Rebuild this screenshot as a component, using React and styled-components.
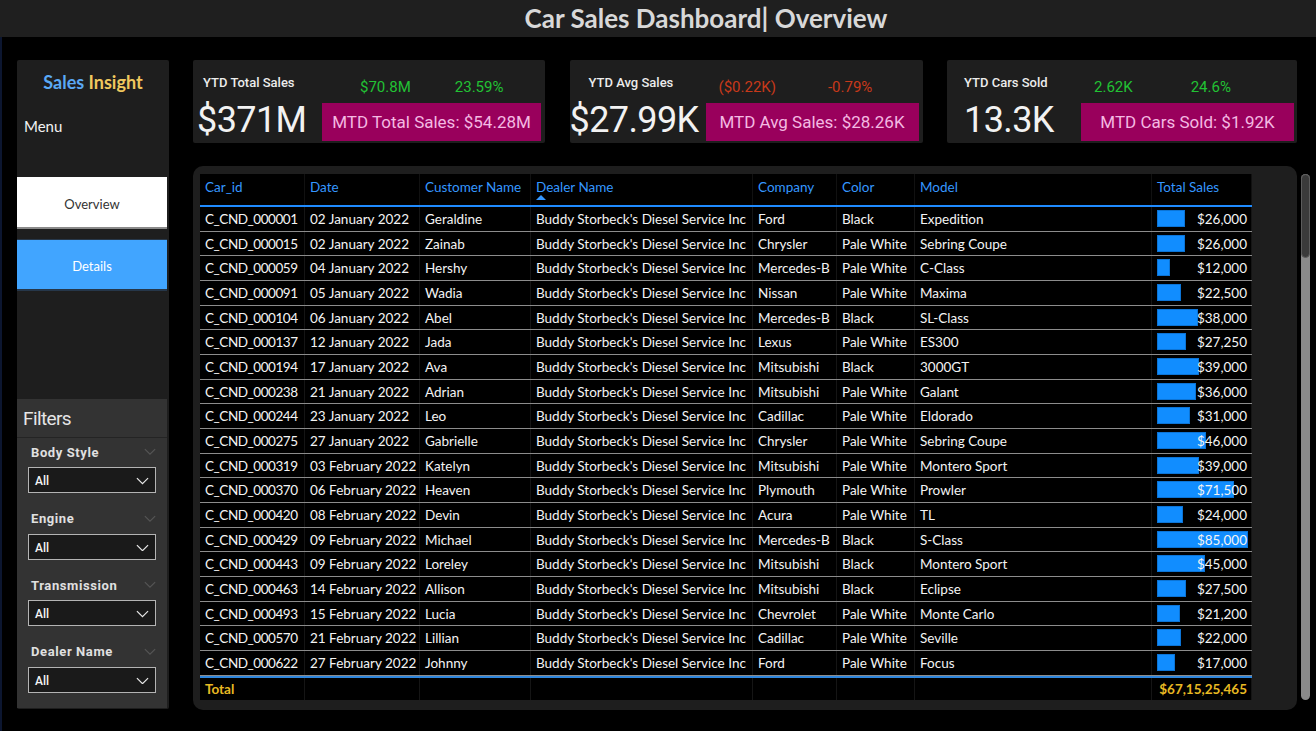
import styled, { createGlobalStyle } from 'styled-components';

const GlobalStyle = createGlobalStyle`
  html, body {
    margin: 0;
    padding: 0;
    background: #000;
  }
  body {
    font-family: Lato, "Liberation Sans", sans-serif;
    color: #fff;
  }
  * {
    box-sizing: border-box;
  }
`;

const rows = [
  ['C_CND_000001', '02 January 2022', 'Geraldine', 'Ford', 'Black', 'Expedition', 26000],
  ['C_CND_000015', '02 January 2022', 'Zainab', 'Chrysler', 'Pale White', 'Sebring Coupe', 26000],
  ['C_CND_000059', '04 January 2022', 'Hershy', 'Mercedes-B', 'Pale White', 'C-Class', 12000],
  ['C_CND_000091', '05 January 2022', 'Wadia', 'Nissan', 'Pale White', 'Maxima', 22500],
  ['C_CND_000104', '06 January 2022', 'Abel', 'Mercedes-B', 'Black', 'SL-Class', 38000],
  ['C_CND_000137', '12 January 2022', 'Jada', 'Lexus', 'Pale White', 'ES300', 27250],
  ['C_CND_000194', '17 January 2022', 'Ava', 'Mitsubishi', 'Black', '3000GT', 39000],
  ['C_CND_000238', '21 January 2022', 'Adrian', 'Mitsubishi', 'Pale White', 'Galant', 36000],
  ['C_CND_000244', '23 January 2022', 'Leo', 'Cadillac', 'Pale White', 'Eldorado', 31000],
  ['C_CND_000275', '27 January 2022', 'Gabrielle', 'Chrysler', 'Pale White', 'Sebring Coupe', 46000],
  ['C_CND_000319', '03 February 2022', 'Katelyn', 'Mitsubishi', 'Pale White', 'Montero Sport', 39000],
  ['C_CND_000370', '06 February 2022', 'Heaven', 'Plymouth', 'Pale White', 'Prowler', 71500],
  ['C_CND_000420', '08 February 2022', 'Devin', 'Acura', 'Pale White', 'TL', 24000],
  ['C_CND_000429', '09 February 2022', 'Michael', 'Mercedes-B', 'Black', 'S-Class', 85000],
  ['C_CND_000443', '09 February 2022', 'Loreley', 'Mitsubishi', 'Black', 'Montero Sport', 45000],
  ['C_CND_000463', '14 February 2022', 'Allison', 'Mitsubishi', 'Black', 'Eclipse', 27500],
  ['C_CND_000493', '15 February 2022', 'Lucia', 'Chevrolet', 'Pale White', 'Monte Carlo', 21200],
  ['C_CND_000570', '21 February 2022', 'Lillian', 'Cadillac', 'Pale White', 'Seville', 22000],
  ['C_CND_000622', '27 February 2022', 'Johnny', 'Ford', 'Pale White', 'Focus', 17000],
];

const kpis = [
  {
    label: 'YTD Total Sales', value: '$371M', a: '$70.8M', b: '23.59%', up: true,
    mtd: 'MTD Total Sales: $54.28M', w: 352, boxW: 219, labelPad: 10, valuePad: 4, right: 4,
    numPad: 38, numGap: 44,
  },
  {
    label: 'YTD Avg Sales', value: '$27.99K', a: '($0.22K)', b: '-0.79%', up: false,
    mtd: 'MTD Avg Sales: $28.26K', w: 353, boxW: 213, labelPad: 19, valuePad: 0, right: 4,
    numPad: 13, numGap: 52,
  },
  {
    label: 'YTD Cars Sold', value: '13.3K', a: '2.62K', b: '24.6%', up: true,
    mtd: 'MTD Cars Sold: $1.92K', w: 350, boxW: 213, labelPad: 17, valuePad: 17, right: 3,
    numPad: 13, numGap: 58,
  },
];

const columns = ['Car_id', 'Date', 'Customer Name', 'Dealer Name', 'Company', 'Color', 'Model', 'Total Sales'];
const colTemplate = '105px 115px 111px 222px 84px 78px 237px 100px';
const filters = ['Body Style', 'Engine', 'Transmission', 'Dealer Name'];

const fmt = (n) => '$' + n.toLocaleString('en-US');

const Page = styled.div`
  width: 1316px;
  height: 731px;
  overflow: hidden;
  display: flex;
  flex-direction: column;
`;

const TitleBar = styled.header`
  height: 37px;
  background: #1f1f1f;
  display: flex;
  align-items: center;
  justify-content: center;
  padding-left: 96px;
`;

const Title = styled.h1`
  margin: 0 0 2px;
  font-family: Lato, sans-serif;
  font-weight: 700;
  font-size: 26px;
  line-height: 30px;
  color: #d8d8d8;
`;

const Body = styled.div`
  flex: 1;
  display: flex;
  gap: 24px;
  padding: 23px 19px 0 15px;
  border-left: 2px solid #0c1630;
`;

const Sidebar = styled.aside`
  width: 152px;
  height: 649px;
  background: #1e1e1e;
  border-radius: 2px;
  display: flex;
  flex-direction: column;
`;

const Brand = styled.div`
  margin-top: 11px;
  height: 22px;
  text-align: center;
  font-size: 18px;
  font-weight: 700;
  line-height: 22px;
`;

const Word = styled.span`
  color: ${(p) => p.color};
`;

const MenuLabel = styled.div`
  margin-top: 24px;
  padding-left: 7px;
  font-size: 15px;
  line-height: 18px;
  color: #f2f2f2;
`;

const NavButton = styled.div`
  width: 150px;
  height: 52px;
  margin-top: ${(p) => p.top}px;
  padding-top: 3px;
  display: flex;
  align-items: center;
  justify-content: center;
  font-size: 13px;
  background: ${(p) => (p.active ? '#fff' : '#41a5ff')};
  color: ${(p) => (p.active ? '#333' : '#fff')};
  border-bottom: 2px solid ${(p) => (p.active ? '#8a8a8a' : '#26374a')};
  border-top: ${(p) => (p.active ? 'none' : '1px solid #26374a')};
`;

const FilterPanel = styled.div`
  margin-top: auto;
  margin-bottom: 1px;
  width: 150px;
  height: 309px;
  background: #333;
`;

const FilterHead = styled.div`
  height: 39px;
  padding-left: 6px;
  display: flex;
  align-items: center;
  font-family: Roboto, sans-serif;
  font-size: 19px;
  letter-spacing: -0.6px;
  color: #e6e6e6;
  border-bottom: 1px solid #242424;
`;

const FilterSection = styled.div`
  padding: 4px 11px 11.5px 11px;
`;

const FilterLabelRow = styled.div`
  height: 20px;
  display: flex;
  align-items: center;
  justify-content: space-between;
  padding-left: 3px;
  font-family: Roboto, sans-serif;
  font-weight: 700;
  font-size: 13px;
  letter-spacing: 0.6px;
  color: #e0e0e0;
`;

const Dropdown = styled.div`
  margin-top: 5px;
  height: 26px;
  width: 128px;
  background: #1a1a1a;
  border: 1px solid #b4b4b4;
  display: flex;
  align-items: center;
  justify-content: space-between;
  padding: 2px 6px 0 6px;
  font-family: Roboto, sans-serif;
  font-size: 12px;
  font-weight: 500;
  color: #f4f4f4;
`;

const Main = styled.main`
  width: 1104px;
  display: flex;
  flex-direction: column;
  gap: 23px;
`;

const KpiRow = styled.div`
  display: flex;
  justify-content: space-between;
`;

const KpiCard = styled.section`
  width: ${(p) => p.w}px;
  height: 83px;
  background: #1e1e1e;
  border-radius: 2px;
  display: grid;
  grid-template-columns: 1fr ${(p) => p.boxW}px;
  grid-template-rows: 43px 38px;
  padding-right: ${(p) => p.right}px;
`;

const KpiLabel = styled.div`
  padding: 15px 0 0 ${(p) => p.pad}px;
  font-family: Roboto, sans-serif;
  font-weight: 500;
  font-size: 13px;
  line-height: 16px;
  color: #ececec;
`;

const KpiNums = styled.div`
  padding: 18px 0 0 ${(p) => p.pad}px;
  display: flex;
  gap: ${(p) => p.gap}px;
  font-family: Roboto, sans-serif;
  font-size: 15px;
  line-height: 18px;
  color: ${(p) => (p.up ? '#22c234' : '#c8391a')};
`;

const KpiValue = styled.div`
  padding-left: ${(p) => p.pad}px;
  margin-top: -3px;
  font-family: Roboto, sans-serif;
  font-size: 36px;
  line-height: 40px;
  color: #f2f2f2;
  letter-spacing: -0.6px;
  white-space: nowrap;
`;

const MtdBox = styled.div`
  background: #99005c;
  display: flex;
  align-items: center;
  justify-content: center;
  font-family: Roboto, sans-serif;
  font-size: 17px;
  color: #f4b9e2;
  white-space: nowrap;
`;

const TablePanel = styled.section`
  position: relative;
  height: 544px;
  background: #1e1e1e;
  border-radius: 10px;
  padding: 8px 0 0 7px;
`;

const Table = styled.div`
  width: 1052px;
  height: 526px;
  background: #000;
  font-size: 13.5px;
`;

const HeadRow = styled.div`
  display: grid;
  grid-template-columns: ${colTemplate};
  height: 33px;
  border-bottom: 2px solid #1f8bff;
`;

const HeadCell = styled.div`
  position: relative;
  padding: 5px 0 0 5px;
  line-height: 16px;
  color: #3597ff;
  border-right: 1px solid #111;
`;

const SortArrow = styled.span`
  position: absolute;
  left: 5px;
  top: 21px;
  width: 0;
  height: 0;
  border-left: 5px solid transparent;
  border-right: 5px solid transparent;
  border-bottom: 5px solid #3597ff;
`;

const Row = styled.div`
  display: grid;
  grid-template-columns: ${colTemplate};
  height: 24.68px;
  border-bottom: 1px solid #8c8c8c;
`;

const Cell = styled.div`
  position: relative;
  display: flex;
  align-items: center;
  justify-content: ${(p) => (p.right ? 'flex-end' : 'flex-start')};
  padding: 0 ${(p) => (p.right ? '4px' : '0')} 0 5px;
  color: #f4f4f4;
  white-space: nowrap;
  overflow: hidden;
  letter-spacing: ${(p) => (p.tight ? '-0.45px' : 'normal')};
  border-right: 1px solid #151515;
`;

const Bar = styled.span`
  position: absolute;
  left: 5px;
  top: 3px;
  height: 17px;
  background: #118dff;
  box-shadow: inset 0 0 0 1px #0c74d6;
`;

const CellText = styled.span`
  position: relative;
`;

const TotalRow = styled.div`
  display: grid;
  grid-template-columns: ${colTemplate};
  height: 24px;
  border-top: 2px solid #2e86de;
`;

const TotalCell = styled(Cell)`
  color: #e8b923;
  font-weight: 700;
`;

const Scrollbar = styled.div`
  position: absolute;
  right: -13px;
  top: 8px;
  width: 9px;
  height: 526px;
  border-radius: 5px;
  background: #8a8a8a;
`;

const Thumb = styled.div`
  height: 84px;
  border-radius: 5px;
  background: #3a3a3a;
  border: 1px solid #5c5c5c;
`;

const Chevron = ({ color = '#fff', size = 14 }) => (
  <svg width={size} height={size * 0.6} viewBox="0 0 14 8" fill="none">
    <path d="M1 1l6 6 6-6" stroke={color} strokeWidth="1.3" />
  </svg>
);

export default function App() {
  return (
    <>
      <GlobalStyle />
      <Page>
        <TitleBar>
          <Title>Car Sales Dashboard| Overview</Title>
        </TitleBar>
        <Body>
          <Sidebar>
            <Brand>
              <Word color="#5aa9f5">Sales</Word> <Word color="#f0c85e">Insight</Word>
            </Brand>
            <MenuLabel>Menu</MenuLabel>
            <NavButton active top={42}>Overview</NavButton>
            <NavButton top={10}>Details</NavButton>
            <FilterPanel>
              <FilterHead>Filters</FilterHead>
              {filters.map((f) => (
                <FilterSection key={f}>
                  <FilterLabelRow>
                    {f}
                    <Chevron color="#555" size={12} />
                  </FilterLabelRow>
                  <Dropdown>
                    All
                    <Chevron color="#e8e8e8" size={13} />
                  </Dropdown>
                </FilterSection>
              ))}
            </FilterPanel>
          </Sidebar>
          <Main>
            <KpiRow>
              {kpis.map((k) => (
                <KpiCard key={k.label} w={k.w} boxW={k.boxW} right={k.right}>
                  <KpiLabel pad={k.labelPad}>{k.label}</KpiLabel>
                  <KpiNums pad={k.numPad} gap={k.numGap} up={k.up}>
                    <span>{k.a}</span>
                    <span>{k.b}</span>
                  </KpiNums>
                  <KpiValue pad={k.valuePad}>{k.value}</KpiValue>
                  <MtdBox>{k.mtd}</MtdBox>
                </KpiCard>
              ))}
            </KpiRow>
            <TablePanel>
              <Table>
                <HeadRow>
                  {columns.map((c) => (
                    <HeadCell key={c}>
                      {c}
                      {c === 'Dealer Name' && <SortArrow />}
                    </HeadCell>
                  ))}
                </HeadRow>
                {rows.map((r) => (
                  <Row key={r[0]}>
                    <Cell tight>{r[0]}</Cell>
                    <Cell>{r[1]}</Cell>
                    <Cell>{r[2]}</Cell>
                    <Cell>Buddy Storbeck's Diesel Service Inc</Cell>
                    <Cell>{r[3]}</Cell>
                    <Cell>{r[4]}</Cell>
                    <Cell>{r[5]}</Cell>
                    <Cell right>
                      <Bar style={{ width: `${(r[6] / 85000) * 91}px` }} />
                      <CellText>{fmt(r[6])}</CellText>
                    </Cell>
                  </Row>
                ))}
                <TotalRow>
                  <TotalCell>Total</TotalCell>
                  <TotalCell />
                  <TotalCell />
                  <TotalCell />
                  <TotalCell />
                  <TotalCell />
                  <TotalCell />
                  <TotalCell right>$67,15,25,465</TotalCell>
                </TotalRow>
              </Table>
              <Scrollbar>
                <Thumb />
              </Scrollbar>
            </TablePanel>
          </Main>
        </Body>
      </Page>
    </>
  );
}
